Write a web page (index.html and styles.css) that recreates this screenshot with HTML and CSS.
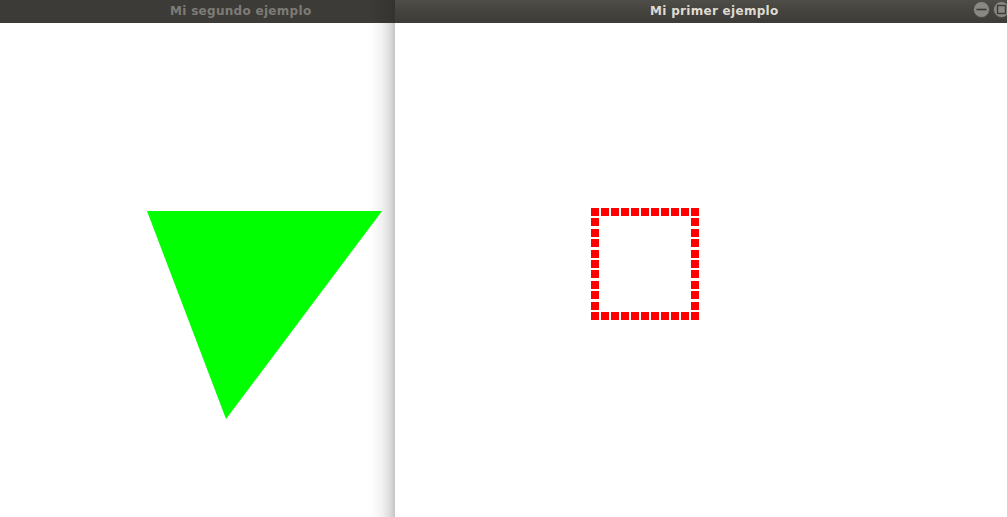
FILE: index.html
```html
<!DOCTYPE html>
<html>
<head>
<meta charset="utf-8">
<link rel="stylesheet" href="styles.css">
</head>
<body>
<div class="desk">
  <section class="win win-left">
    <header class="titlebar inactive"><span class="title">Mi segundo ejemplo</span></header>
    <div class="content left-content">
      <svg class="canvas" width="395" height="494" viewBox="0 0 395 494">
        <polygon points="147,188 382,188 226,396" fill="#00ff00"/>
      </svg>
    </div>
  </section>
  <section class="win win-right">
    <header class="titlebar active">
      <span class="title">Mi primer ejemplo</span>
      <div class="buttons">
        <span class="btn"><svg width="17" height="17" viewBox="0 0 17 17"><circle cx="8.5" cy="8.5" r="8" fill="#8a8883" stroke="#4a4843" stroke-width="1"/><line x1="3.5" y1="8.5" x2="13.5" y2="8.5" stroke="#3c3b37" stroke-width="1.6"/></svg></span>
        <span class="btn"><svg width="17" height="17" viewBox="0 0 17 17"><circle cx="8.5" cy="8.5" r="8" fill="#8a8883" stroke="#4a4843" stroke-width="1"/><rect x="4.5" y="4.5" width="8" height="8" fill="none" stroke="#3c3b37" stroke-width="1.4"/></svg></span>
      </div>
    </header>
    <div class="content">
      <svg class="canvas" width="612" height="494" viewBox="0 0 612 494" fill="#ff0000">
        <g>
          <rect x="196" y="185" width="8" height="8"/><rect x="206" y="185" width="8" height="8"/><rect x="216" y="185" width="8" height="8"/><rect x="226" y="185" width="8" height="8"/><rect x="236" y="185" width="8" height="8"/><rect x="246" y="185" width="8" height="8"/><rect x="256" y="185" width="8" height="8"/><rect x="266" y="185" width="8" height="8"/><rect x="276" y="185" width="8" height="8"/><rect x="286" y="185" width="8" height="8"/><rect x="296" y="185" width="8" height="8"/>
          <rect x="196" y="289" width="8" height="8"/><rect x="206" y="289" width="8" height="8"/><rect x="216" y="289" width="8" height="8"/><rect x="226" y="289" width="8" height="8"/><rect x="236" y="289" width="8" height="8"/><rect x="246" y="289" width="8" height="8"/><rect x="256" y="289" width="8" height="8"/><rect x="266" y="289" width="8" height="8"/><rect x="276" y="289" width="8" height="8"/><rect x="286" y="289" width="8" height="8"/><rect x="296" y="289" width="8" height="8"/>
          <rect x="196" y="195" width="8" height="8"/><rect x="196" y="206" width="8" height="8"/><rect x="196" y="216" width="8" height="8"/><rect x="196" y="227" width="8" height="8"/><rect x="196" y="237" width="8" height="8"/><rect x="196" y="247" width="8" height="8"/><rect x="196" y="258" width="8" height="8"/><rect x="196" y="268" width="8" height="8"/><rect x="196" y="279" width="8" height="8"/>
          <rect x="296" y="195" width="8" height="8"/><rect x="296" y="206" width="8" height="8"/><rect x="296" y="216" width="8" height="8"/><rect x="296" y="227" width="8" height="8"/><rect x="296" y="237" width="8" height="8"/><rect x="296" y="247" width="8" height="8"/><rect x="296" y="258" width="8" height="8"/><rect x="296" y="268" width="8" height="8"/><rect x="296" y="279" width="8" height="8"/>
        </g>
      </svg>
    </div>
  </section>
</div>
</body>
</html>
```

FILE: styles.css
```css
html, body {
  margin: 0;
  padding: 0;
  background: #ffffff;
  overflow: hidden;
}
.desk {
  display: flex;
  width: 1007px;
  height: 517px;
}
.win {
  display: flex;
  flex-direction: column;
  height: 517px;
}
.win-left {
  width: 395px;
  flex: none;
}
.win-right {
  flex: 1;
}
.titlebar {
  height: 23px;
  flex: none;
  position: relative;
  display: flex;
  align-items: center;
  font-family: "DejaVu Sans", "Open Sans", sans-serif;
  font-weight: bold;
  font-size: 12px;
  letter-spacing: 0.3px;
  box-sizing: border-box;
  padding-bottom: 1px;
}
.titlebar.inactive {
  background: linear-gradient(to right, #3c3b37 0, #3c3b37 370px, #34332f 395px);
  color: #7e7b76;
  padding-left: 170px;
}
.titlebar.active {
  background: linear-gradient(to bottom, #4f4d47 0%, #45433e 50%, #3c3b37 100%);
  color: #dfdbd2;
  padding-left: 255px;
}
.buttons {
  position: absolute;
  right: -3px;
  top: 1px;
  display: flex;
  gap: 3px;
}
.btn {
  display: block;
  width: 17px;
  height: 17px;
}
.btn svg {
  display: block;
}
.content {
  flex: 1;
  background: #ffffff;
}
.left-content {
  background: linear-gradient(to right, #ffffff 0, #ffffff 370px, #f2f2f2 382px, #dcdcdc 390px, #c4c4c4 395px);
}
.canvas {
  display: block;
}
```
